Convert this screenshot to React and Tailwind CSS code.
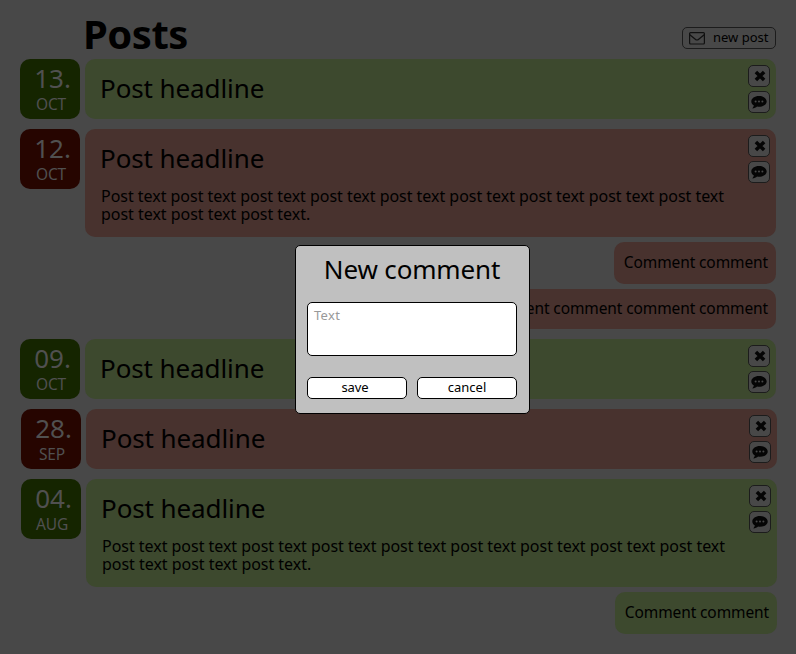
const tones = {
  green: { tile: "bg-[#152500]", card: "bg-[#3d492e]" },
  red: { tile: "bg-[#260500]", card: "bg-[#48322e]" },
};

const body =
  "Post text post text post text post text post text post text post text post text post text";

const posts = [
  { day: "13.", month: "OCT", tone: "green", shift: false, comments: [] },
  {
    day: "12.",
    month: "OCT",
    tone: "red",
    shift: false,
    text: true,
    comments: [
      { text: "Comment comment", size: "h-[42px]" },
      { text: "Comment comment comment comment comment", size: "h-10" },
    ],
  },
  { day: "09.", month: "OCT", tone: "green", shift: false, comments: [] },
  { day: "28.", month: "SEP", tone: "red", shift: true, comments: [] },
  {
    day: "04.",
    month: "AUG",
    tone: "green",
    shift: true,
    text: true,
    comments: [{ text: "Comment comment", size: "h-[42px]" }],
  },
];

function CloseIcon() {
  return (
    <svg className="ml-px" width="12" height="12" viewBox="0 0 12 12" stroke="#050505" strokeWidth="3.5">
      <path d="M1.9 1.9 10.1 10.1M10.1 1.9 1.9 10.1" />
    </svg>
  );
}

function CommentIcon() {
  return (
    <svg width="16" height="13" viewBox="0 0 16 13">
      <path
        d="M8 0C3.6 0 .3 2.5.3 5.4c0 1.700 1 3.100 2.600 4.100-.3 1.200-.8 2-1.600 2.900 2 0 3.600-.8 4.800-1.900.6.1 1.200.2 1.900.2 4.400 0 7.700-2.400 7.700-5.300S12.400 0 8 0Z"
        fill="#050505"
      />
      <g fill="#484848">
        <circle cx="4.6" cy="5.5" r="1" />
        <circle cx="8" cy="5.5" r="1" />
        <circle cx="11.4" cy="5.5" r="1" />
      </g>
    </svg>
  );
}

function MailIcon() {
  return (
    <svg width="16" height="13" viewBox="0 0 16 13" fill="none" stroke="#101010" strokeWidth="1.2">
      <rect x="0.6" y="0.6" width="14.800" height="11.400" rx="1" />
      <path d="M.8 2.800 6.300 7.300Q8 8.700 9.700 7.300L15.200 2.800" />
    </svg>
  );
}

function IconButton({ label, children }) {
  return (
    <button
      aria-label={label}
      className="flex h-[22px] w-[22px] items-center justify-center rounded-[5px] border border-[#1c1c1c] bg-[#484848]"
    >
      {children}
    </button>
  );
}

function Post({ post }) {
  const tone = tones[post.tone];
  return (
    <article className={post.shift ? "ml-px -mr-px" : ""}>
      <div className="flex items-start gap-[5px]">
        <div
          className={`flex h-[60px] w-[60px] flex-col items-center rounded-[10px] pl-[3px] pt-1 text-[#505050] ${tone.tile}`}
        >
          <span className="pl-0.5 text-[26px] leading-[30px]">{post.day}</span>
          <span className="pr-px pt-px text-[15.5px] leading-5 tracking-[-0.1px]">{post.month}</span>
        </div>
        <div
          className={`flex flex-1 justify-between rounded-[10px] pl-[15px] pr-1.5 pt-1.5 ${tone.card} ${post.text ? "h-[108px]" : "h-[60px]"}`}
        >
          <div className="w-0 pt-[5px]">
            <h2 className="whitespace-nowrap text-[26px] leading-9 tracking-[-0.1px]">Post headline</h2>
            {post.text && (
              <p className="whitespace-nowrap pl-px pt-[11px] text-[16px] leading-[18px] tracking-[-0.03px]">
                {body}
                <br />
                post text post text post text.
              </p>
            )}
          </div>
          <div className="flex flex-col gap-1">
            <IconButton label="Delete post">
              <CloseIcon />
            </IconButton>
            <IconButton label="Comment on post">
              <CommentIcon />
            </IconButton>
          </div>
        </div>
      </div>
      {post.comments.map((comment, i) => (
        <div key={i} className="mt-[5px] flex justify-end">
          <p
            className={`flex items-center whitespace-nowrap rounded-[10px] px-2 text-[15.5px] tracking-[-0.11px] ${comment.text.length < 20 ? "w-[162px] justify-end" : ""} ${comment.size} ${tone.card}`}
          >
            {comment.text}
          </p>
        </div>
      ))}
    </article>
  );
}

export default function App() {
  return (
    <div className="relative h-[654px] w-[796px] overflow-hidden bg-[#484848] font-['Noto_Sans',sans-serif] text-black">
      <header className="flex h-[59px] items-start justify-between pl-[83px] pr-5">
        <h1 className="pt-[9px] text-[40px] font-bold leading-[50px] tracking-[-0.5px]">Posts</h1>
        <button className="mt-[27px] flex h-[22px] w-[94px] items-center rounded-[5px] border border-[#1c1c1c] pl-1.5 text-[13px]">
          <MailIcon />
          <span className="ml-2 whitespace-nowrap">new post</span>
        </button>
      </header>
      <main className="flex flex-col gap-[10px] px-5">
        {posts.map((post) => (
          <Post key={post.day} post={post} />
        ))}
      </main>

      <section
        role="dialog"
        aria-label="New comment"
        className="absolute left-[295px] top-[245px] flex h-[169px] w-[235px] flex-col rounded-[5px] border border-black bg-[#c0c0c0] pl-[11px] pr-3"
      >
        <h2 className="whitespace-nowrap pt-[5px] text-center text-[26px] leading-9 tracking-[-0.15px]">New comment</h2>
        <textarea
          placeholder="Text"
          className="mt-[15px] h-[54px] w-full resize-none rounded-[5px] border border-black bg-white px-1.5 py-[3px] text-[13px] leading-[18px] tracking-[0.3px] placeholder:text-[#999999]"
        />
        <div className="mt-[21px] flex gap-[10px] text-[13px]">
          <button className="h-[22px] w-[100px] rounded-[5px] border border-black bg-white pb-0.5 pr-1 leading-[18px] tracking-[-0.1px]">save</button>
          <button className="h-[22px] w-[100px] rounded-[5px] border border-black bg-white pb-0.5 leading-[18px]">cancel</button>
        </div>
      </section>
    </div>
  );
}
